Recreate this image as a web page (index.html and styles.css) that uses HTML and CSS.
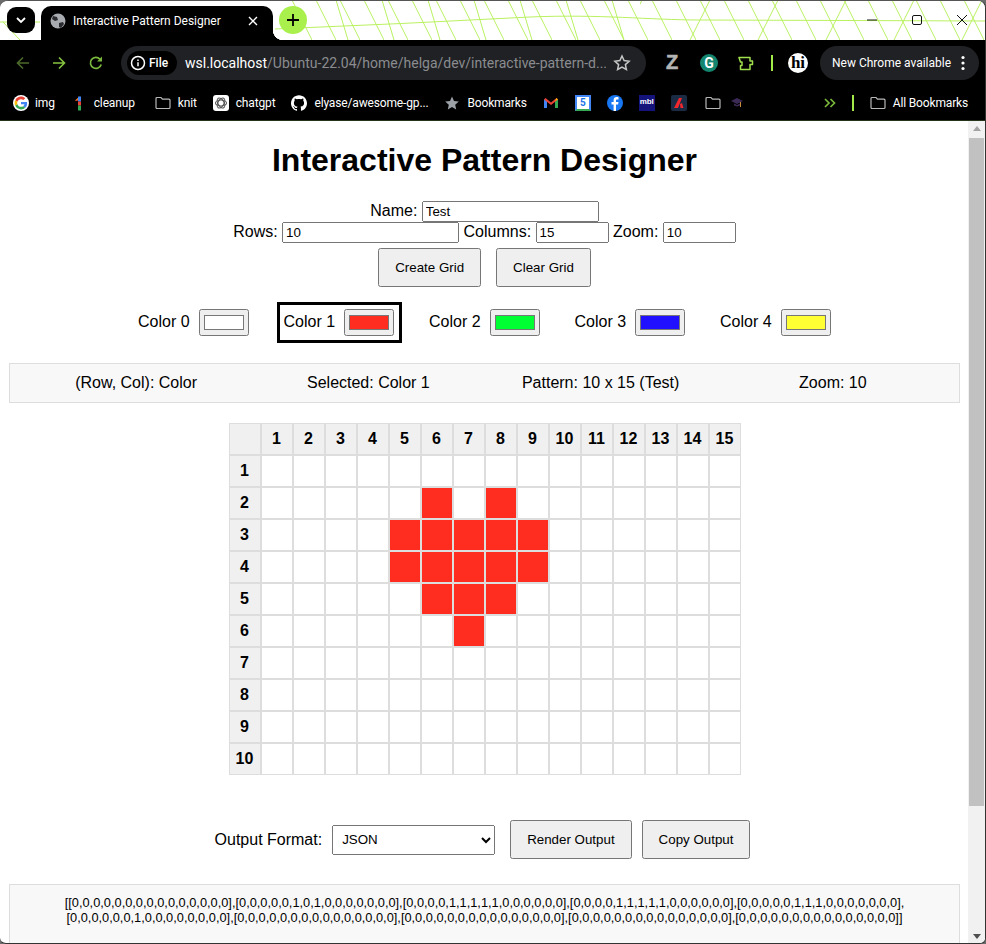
FILE: index.html
```html
<!DOCTYPE html>
<html lang="en">
<head>
    <meta charset="UTF-8">
    <meta name="viewport" content="width=device-width, initial-scale=1.0">
    <title>Interactive Pattern Designer</title>
    <link rel="stylesheet" href="styles.css">
</head>
<body>
<div class="window">
    <header class="titlebar">
        <svg class="theme-lines" width="986" height="40" viewBox="0 0 986 40">
            <defs>
                <pattern id="back-lines" width="24" height="40" patternUnits="userSpaceOnUse">
                    <path d="M4 0L24 40" stroke="#b9f160" fill="none"/>
                </pattern>
                <pattern id="steep-lines" width="46" height="40" patternUnits="userSpaceOnUse">
                    <path d="M14 0L26 40" stroke="#b9f160" fill="none"/>
                </pattern>
                <pattern id="fwd-lines" width="68" height="40" patternUnits="userSpaceOnUse">
                    <path d="M30 0L10 40" stroke="#b9f160" fill="none"/>
                </pattern>
            </defs>
            <rect x="290" width="696" height="40" fill="url(#back-lines)"/>
            <rect x="320" width="320" height="40" fill="url(#steep-lines)"/>
            <rect x="640" width="346" height="40" fill="url(#fwd-lines)"/>
            <path d="M0 22L40 22M3 22L20 40M275 29Q400 24 530 17C600 14 650 20 700 20L986 21" stroke="#b9f160" fill="none"/>
        </svg>
        <button class="tab-search">
            <svg width="12" height="12" viewBox="0 0 12 12"><path d="M2 4l4 4 4-4" stroke="#fff" stroke-width="1.8" fill="none"/></svg>
        </button>
        <div class="tab">
            <svg width="16" height="16" viewBox="0 0 16 16">
                <circle cx="8" cy="8" r="7.5" fill="#a8abb0"/>
                <path d="M3 3l4 1 1 3-3 1-3-2zM9 10l4-1 1 2-3 4-2-1z" fill="#2a2b2e"/>
            </svg>
            <span class="tab-title">Interactive Pattern Designer</span>
            <svg width="12" height="12" viewBox="0 0 12 12"><path d="M2 2l8 8M10 2l-8 8" stroke="#fff" stroke-width="1.4"/></svg>
        </div>
        <button class="new-tab">
            <svg width="14" height="14" viewBox="0 0 14 14"><path d="M7 1v12M1 7h12" stroke="#000" stroke-width="1.8"/></svg>
        </button>
        <div class="window-controls">
            <svg width="12" height="12" viewBox="0 0 12 12"><path d="M1 6h10" stroke="#111"/></svg>
            <svg width="12" height="12" viewBox="0 0 12 12"><rect x="1.5" y="1.5" width="9" height="9" rx="1.5" stroke="#111" fill="none"/></svg>
            <svg width="12" height="12" viewBox="0 0 12 12"><path d="M1 1l10 10M11 1L1 11" stroke="#111"/></svg>
        </div>
    </header>

    <nav class="toolbar">
        <svg class="nav-back" width="16" height="16" viewBox="0 0 16 16"><path d="M14 8H2.5M8 2.5L2.5 8 8 13.5" stroke="#4c6a2a" stroke-width="1.6" fill="none"/></svg>
        <svg class="nav-forward" width="16" height="16" viewBox="0 0 16 16"><path d="M2 8h11.5M8 2.5L13.5 8 8 13.5" stroke="#86c440" stroke-width="1.6" fill="none"/></svg>
        <svg class="nav-reload" width="16" height="16" viewBox="0 0 16 16"><path d="M13.2 9.5A5.5 5.5 0 1 1 12 4.2" stroke="#7ab83c" stroke-width="1.7" fill="none"/><path d="M14 1.5V6.5H9z" fill="#7ab83c"/></svg>
        <div class="omnibox">
            <span class="chip">
                <svg width="16" height="16" viewBox="0 0 16 16"><circle cx="8" cy="8" r="6.5" stroke="#fff" stroke-width="1.5" fill="none"/><path d="M8 7.2v4M8 4.5v1.5" stroke="#fff" stroke-width="1.5"/></svg>
                File
            </span>
            <span class="url"><b>wsl.localhost</b>/Ubuntu-22.04/home/helga/dev/interactive-pattern-d...</span>
            <svg width="18" height="18" viewBox="0 0 18 18"><path d="M9 2l2.1 4.6 5 .6-3.7 3.4 1 4.9L9 13l-4.400 2.500 1-4.900L1.900 7.200l5-.6z" stroke="#c4c7c5" stroke-width="1.500" fill="none"/></svg>
        </div>
        <span class="ext-z">Z</span>
        <span class="ext-g">G</span>
        <svg class="ext-puzzle" width="18" height="18" viewBox="0 0 18 18"><path d="M2 3.500h11v3.500h2.500v3.500H13v5H3.500v-4H5V8H3.500z" stroke="#9fe04c" stroke-width="1.500" stroke-linejoin="round" fill="none"/></svg>
        <span class="divider"></span>
        <span class="avatar">hi</span>
        <span class="update-pill">New Chrome available
            <svg width="4" height="16" viewBox="0 0 4 16"><circle cx="2" cy="2.500" r="1.600" fill="#fff"/><circle cx="2" cy="8" r="1.600" fill="#fff"/><circle cx="2" cy="13.500" r="1.600" fill="#fff"/></svg>
        </span>
    </nav>

    <nav class="bookmarks">
        <a class="bookmark first-mark">
            <svg class="g-logo" width="16" height="16" viewBox="-6 -6 60 60">
                <circle cx="24" cy="24" r="30" fill="#fff"/>
                <path fill="#EA4335" d="M24 9.500c3.540 0 6.710 1.220 9.210 3.600l6.850-6.850C35.900 2.380 30.470 0 24 0 14.620 0 6.510 5.380 2.560 13.220l7.980 6.190C12.430 13.720 17.740 9.500 24 9.500z"/>
                <path fill="#4285F4" d="M46.980 24.550c0-1.570-.15-3.090-.38-4.550H24v9.020h12.940c-.58 2.960-2.260 5.480-4.780 7.180l7.730 6c4.510-4.180 7.090-10.360 7.090-17.650z"/>
                <path fill="#FBBC05" d="M10.530 28.590c-.48-1.450-.76-2.990-.76-4.590s.27-3.140.76-4.590l-7.980-6.190C.92 16.460 0 20.120 0 24c0 3.880.92 7.540 2.560 10.780l7.970-6.190z"/>
                <path fill="#34A853" d="M24 48c6.480 0 11.930-2.130 15.890-5.810l-7.730-6c-2.150 1.450-4.920 2.300-8.160 2.300-6.260 0-11.570-4.220-13.470-9.910l-7.980 6.190C6.510 42.620 14.620 48 24 48z"/>
            </svg>
            img
        </a>
        <a class="bookmark">
            <svg width="16" height="16" viewBox="0 0 16 16">
                <path d="M4 5.500L8.500 1.500V5z" fill="#f9ab00"/><path d="M4 5.500L6.500 3.500V6z" fill="#ea4335"/>
                <rect x="7" y="1.500" width="3" height="5" fill="#4285f4"/><rect x="7" y="6.500" width="3" height="4" fill="#ea4335"/><rect x="7" y="10.500" width="3" height="5" fill="#34a853"/>
            </svg>
            cleanup
        </a>
        <a class="bookmark folder-mark">
            <svg width="16" height="14" viewBox="0 0 16 14"><path d="M1 2.500a1 1 0 0 1 1-1h4l1.500 1.700H14a1 1 0 0 1 1 1v7.300a1 1 0 0 1-1 1H2a1 1 0 0 1-1-1z" stroke="#b8b8b8" stroke-width="1.200" fill="none"/></svg>
            knit
        </a>
        <a class="bookmark">
            <svg width="16" height="16" viewBox="0 0 16 16">
                <rect width="16" height="16" rx="3" fill="#fff"/>
                <g stroke="#555" stroke-width="1.100" fill="none"><ellipse cx="8" cy="8" rx="5.500" ry="3"/><ellipse cx="8" cy="8" rx="5.500" ry="3" transform="rotate(60 8 8)"/><ellipse cx="8" cy="8" rx="5.500" ry="3" transform="rotate(120 8 8)"/></g>
            </svg>
            chatgpt
        </a>
        <a class="bookmark">
            <svg width="16" height="16" viewBox="0 0 24 24"><path fill="#fff" d="M12 .297c-6.630 0-12 5.373-12 12 0 5.303 3.438 9.800 8.205 11.385.6.113.82-.258.82-.577 0-.285-.01-1.040-.015-2.040-3.338.724-4.042-1.610-4.042-1.610C4.422 18.070 3.633 17.700 3.633 17.700c-1.087-.744.084-.729.084-.729 1.205.084 1.838 1.236 1.838 1.236 1.070 1.835 2.809 1.305 3.495.998.108-.776.417-1.305.76-1.605-2.665-.3-5.466-1.332-5.466-5.930 0-1.310.465-2.380 1.235-3.220-.135-.303-.54-1.523.105-3.176 0 0 1.005-.322 3.300 1.230.96-.267 1.980-.399 3-.405 1.020.006 2.040.138 3 .405 2.280-1.552 3.285-1.230 3.285-1.230.645 1.653.24 2.873.12 3.176.765.84 1.230 1.910 1.230 3.220 0 4.610-2.805 5.625-5.475 5.920.42.36.81 1.096.81 2.220 0 1.606-.015 2.896-.015 3.286 0 .315.21.69.825.57C20.565 22.092 24 17.592 24 12.297c0-6.627-5.373-12-12-12"/></svg>
            elyase/awesome-gp...
        </a>
        <a class="bookmark">
            <svg width="16" height="16" viewBox="0 0 16 16"><path d="M8 1.500l2 4.500 4.800.5-3.600 3.200 1 4.800L8 12.100l-4.200 2.400 1-4.800L1.200 6.500 6 6z" fill="#9aa0a6"/></svg>
            Bookmarks
        </a>
        <a class="bookmark">
            <svg width="16" height="16" viewBox="0 0 16 16">
                <path d="M1 13V4l3 2v7z" fill="#4285f4"/><path d="M15 13V4l-3 2v7z" fill="#34a853"/>
                <path d="M1 4.500L2.500 3 8 7.500 13.500 3 15 4.500 8 10z" fill="#ea4335"/><path d="M12 6l1.500-3L15 4.500z" fill="#fbbc04"/>
            </svg>
        </a>
        <a class="bookmark"><span class="cal-tile">5</span></a>
        <a class="bookmark">
            <svg width="16" height="16" viewBox="0 0 16 16"><circle cx="8" cy="8" r="8" fill="#1877f2"/><path d="M9 16V9.500h2.100l.4-2.400H9V5.600c0-.7.3-1.200 1.300-1.200h1.200V2.300C11.100 2.200 10.400 2.100 9.800 2.100 7.900 2.100 6.600 3.300 6.600 5.300v1.800H4.500v2.400h2.100V16z" fill="#fff"/></svg>
        </a>
        <a class="bookmark"><span class="mbl-tile">mbl</span></a>
        <a class="bookmark">
            <svg width="16" height="16" viewBox="0 0 16 16"><rect width="16" height="16" rx="2" fill="#1c2b44"/><path d="M3 13L8 3h3l-4 10zM9 9l2-1 1.500 5H9.500z" fill="#f0282d"/></svg>
        </a>
        <a class="bookmark folder-small">
            <svg width="16" height="14" viewBox="0 0 16 14"><path d="M1 2.500a1 1 0 0 1 1-1h4l1.500 1.700H14a1 1 0 0 1 1 1v7.300a1 1 0 0 1-1 1H2a1 1 0 0 1-1-1z" stroke="#b8b8b8" stroke-width="1.200" fill="none"/></svg>
        </a>
        <svg class="cap-icon" width="12" height="12" viewBox="0 0 12 12"><path d="M0 4l6-3 6 3-6 3z" fill="#3a2a55"/><path d="M3 6.500v2l3 1 3-1v-2L6 8z" fill="#3a2a55"/><path d="M9 5l1 0v5H9z" fill="#c98a3c"/></svg>
        <svg class="more-marks" width="12" height="10" viewBox="0 0 12 10"><path d="M1 1l4 4-4 4M6.500 1l4 4-4 4" stroke="#7ab83c" stroke-width="1.700" fill="none"/></svg>
        <span class="divider"></span>
        <a class="bookmark">
            <svg width="16" height="14" viewBox="0 0 16 14"><path d="M1 2.500a1 1 0 0 1 1-1h4l1.500 1.700H14a1 1 0 0 1 1 1v7.300a1 1 0 0 1-1 1H2a1 1 0 0 1-1-1z" stroke="#b8b8b8" stroke-width="1.200" fill="none"/></svg>
            All Bookmarks
        </a>
    </nav>

    <div class="viewport">
        <main class="page">
            <h1>Interactive Pattern Designer</h1>

            <div class="field-line">
                <label>Name:</label>
                <input class="wide-input" type="text" value="Test">
            </div>
            <div class="field-line">
                <label>Rows:</label>
                <input class="wide-input" type="text" value="10">
                <label>Columns:</label>
                <input class="small-input" type="text" value="15">
                <label>Zoom:</label>
                <input class="small-input" type="text" value="10">
            </div>
            <div class="grid-buttons">
                <button>Create Grid</button>
                <button>Clear Grid</button>
            </div>

            <div class="palette">
                <div class="swatch-item"><span>Color 0</span><input type="color" value="#ffffff"></div>
                <div class="swatch-item selected"><span>Color 1</span><input type="color" value="#ff2d20"></div>
                <div class="swatch-item"><span>Color 2</span><input type="color" value="#00ff33"></div>
                <div class="swatch-item"><span>Color 3</span><input type="color" value="#2010ff"></div>
                <div class="swatch-item"><span>Color 4</span><input type="color" value="#ffff33"></div>
            </div>

            <div class="status-bar">
                <span>(Row, Col): Color</span>
                <span>Selected: Color 1</span>
                <span>Pattern: 10 x 15 (Test)</span>
                <span>Zoom: 10</span>
            </div>

            <div class="pattern-grid">
                <div class="cell head"></div><div class="cell head">1</div><div class="cell head">2</div><div class="cell head">3</div><div class="cell head">4</div><div class="cell head">5</div><div class="cell head">6</div><div class="cell head">7</div><div class="cell head">8</div><div class="cell head">9</div><div class="cell head">10</div><div class="cell head">11</div><div class="cell head">12</div><div class="cell head">13</div><div class="cell head">14</div><div class="cell head">15</div>
                <div class="cell head">1</div><div class="cell"></div><div class="cell"></div><div class="cell"></div><div class="cell"></div><div class="cell"></div><div class="cell"></div><div class="cell"></div><div class="cell"></div><div class="cell"></div><div class="cell"></div><div class="cell"></div><div class="cell"></div><div class="cell"></div><div class="cell"></div><div class="cell"></div>
                <div class="cell head">2</div><div class="cell"></div><div class="cell"></div><div class="cell"></div><div class="cell"></div><div class="cell"></div><div class="cell red"></div><div class="cell"></div><div class="cell red"></div><div class="cell"></div><div class="cell"></div><div class="cell"></div><div class="cell"></div><div class="cell"></div><div class="cell"></div><div class="cell"></div>
                <div class="cell head">3</div><div class="cell"></div><div class="cell"></div><div class="cell"></div><div class="cell"></div><div class="cell red"></div><div class="cell red"></div><div class="cell red"></div><div class="cell red"></div><div class="cell red"></div><div class="cell"></div><div class="cell"></div><div class="cell"></div><div class="cell"></div><div class="cell"></div><div class="cell"></div>
                <div class="cell head">4</div><div class="cell"></div><div class="cell"></div><div class="cell"></div><div class="cell"></div><div class="cell red"></div><div class="cell red"></div><div class="cell red"></div><div class="cell red"></div><div class="cell red"></div><div class="cell"></div><div class="cell"></div><div class="cell"></div><div class="cell"></div><div class="cell"></div><div class="cell"></div>
                <div class="cell head">5</div><div class="cell"></div><div class="cell"></div><div class="cell"></div><div class="cell"></div><div class="cell"></div><div class="cell red"></div><div class="cell red"></div><div class="cell red"></div><div class="cell"></div><div class="cell"></div><div class="cell"></div><div class="cell"></div><div class="cell"></div><div class="cell"></div><div class="cell"></div>
                <div class="cell head">6</div><div class="cell"></div><div class="cell"></div><div class="cell"></div><div class="cell"></div><div class="cell"></div><div class="cell"></div><div class="cell red"></div><div class="cell"></div><div class="cell"></div><div class="cell"></div><div class="cell"></div><div class="cell"></div><div class="cell"></div><div class="cell"></div><div class="cell"></div>
                <div class="cell head">7</div><div class="cell"></div><div class="cell"></div><div class="cell"></div><div class="cell"></div><div class="cell"></div><div class="cell"></div><div class="cell"></div><div class="cell"></div><div class="cell"></div><div class="cell"></div><div class="cell"></div><div class="cell"></div><div class="cell"></div><div class="cell"></div><div class="cell"></div>
                <div class="cell head">8</div><div class="cell"></div><div class="cell"></div><div class="cell"></div><div class="cell"></div><div class="cell"></div><div class="cell"></div><div class="cell"></div><div class="cell"></div><div class="cell"></div><div class="cell"></div><div class="cell"></div><div class="cell"></div><div class="cell"></div><div class="cell"></div><div class="cell"></div>
                <div class="cell head">9</div><div class="cell"></div><div class="cell"></div><div class="cell"></div><div class="cell"></div><div class="cell"></div><div class="cell"></div><div class="cell"></div><div class="cell"></div><div class="cell"></div><div class="cell"></div><div class="cell"></div><div class="cell"></div><div class="cell"></div><div class="cell"></div><div class="cell"></div>
                <div class="cell head">10</div><div class="cell"></div><div class="cell"></div><div class="cell"></div><div class="cell"></div><div class="cell"></div><div class="cell"></div><div class="cell"></div><div class="cell"></div><div class="cell"></div><div class="cell"></div><div class="cell"></div><div class="cell"></div><div class="cell"></div><div class="cell"></div><div class="cell"></div>
            </div>

            <div class="output-controls">
                <label>Output Format:</label>
                <select><option>JSON</option></select>
                <button>Render Output</button>
                <button>Copy Output</button>
            </div>

            <div class="output-box">[[0,0,0,0,0,0,0,0,0,0,0,0,0,0,0],[0,0,0,0,0,1,0,1,0,0,0,0,0,0,0],[0,0,0,0,1,1,1,1,1,0,0,0,0,0,0],[0,0,0,0,1,1,1,1,1,0,0,0,0,0,0],[0,0,0,0,0,1,1,1,0,0,0,0,0,0,0],[0,0,0,0,0,0,1,0,0,0,0,0,0,0,0],[0,0,0,0,0,0,0,0,0,0,0,0,0,0,0],[0,0,0,0,0,0,0,0,0,0,0,0,0,0,0],[0,0,0,0,0,0,0,0,0,0,0,0,0,0,0],[0,0,0,0,0,0,0,0,0,0,0,0,0,0,0]]</div>
        </main>
        <div class="scrollbar">
            <span class="arrow-up"></span>
            <span class="thumb"></span>
            <span class="arrow-down"></span>
        </div>
    </div>
</div>
</body>
</html>
```

FILE: styles.css
```css
* {
    box-sizing: border-box;
}
html, body {
    margin: 0;
    height: 100%;
    background: #6b6b6b;
    overflow: hidden;
}
.window {
    height: 944px;
    display: flex;
    flex-direction: column;
    overflow: hidden;
    background: #fff;
    border-radius: 8px 8px 6px 6px;
    border-top: 1px solid #555;
    border-right: 1px solid #333;
    border-bottom: 1px solid #333;
    font-family: "Liberation Sans", Arial, sans-serif;
}

/* browser chrome */
.titlebar {
    position: relative;
    height: 39px;
    flex: none;
    background: #fff;
    display: flex;
    align-items: flex-start;
}
.theme-lines {
    position: absolute;
    top: -1px;
    left: 0;
}
.tab-search {
    position: relative;
    width: 28px;
    height: 26px;
    margin: 6px 0 0 7px;
    padding: 0;
    border: none;
    border-radius: 9px;
    background: #000;
    display: flex;
    align-items: center;
    justify-content: center;
}
.tab {
    position: relative;
    width: 232px;
    height: 34px;
    margin: 5px 0 0 6px;
    padding: 0 14px 4px 9px;
    background: #000;
    border-radius: 10px 10px 0 0;
    display: flex;
    align-items: center;
    gap: 7px;
    color: #fff;
    font: 12px Roboto, sans-serif;
}
.tab::after {
    content: "";
    position: absolute;
    right: -10px;
    bottom: 0;
    width: 10px;
    height: 10px;
    background: radial-gradient(circle at 100% 0, transparent 10px, #000 10.500px);
}
.tab-title {
    flex: 1;
}
.new-tab {
    position: relative;
    width: 28px;
    height: 28px;
    margin: 5px 0 0 6px;
    padding: 0;
    border: none;
    border-radius: 50%;
    background: #a9f04d;
    display: flex;
    align-items: center;
    justify-content: center;
}
.window-controls {
    position: relative;
    margin: 13px 0 0 auto;
    padding-right: 17px;
    display: flex;
    gap: 33px;
}

.toolbar {
    height: 45px;
    flex: none;
    background: #000;
    display: flex;
    align-items: center;
    padding-left: 15px;
}
.nav-forward {
    margin-left: 20px;
}
.nav-reload {
    margin-left: 21px;
}
.omnibox {
    width: 525px;
    height: 34px;
    margin-left: 17px;
    padding: 0 15px 0 6px;
    border-radius: 17px;
    background: #202124;
    display: flex;
    align-items: center;
    font: 14px Roboto, sans-serif;
    color: #8a8c90;
}
.chip {
    height: 24px;
    width: 50px;
    padding-left: 3px;
    margin-right: 8px;
    border-radius: 12px;
    background: #000;
    display: flex;
    align-items: center;
    gap: 3px;
    color: #fff;
    font-size: 12px;
    font-weight: 500;
}
.url {
    flex: 1;
    white-space: nowrap;
}
.url b {
    font-weight: 400;
    color: #fff;
}
.ext-z {
    width: 14px;
    margin-left: 20px;
    color: #b4b4b4;
    font: bold 20px "Liberation Sans", sans-serif;
    -webkit-text-stroke: 0.6px #b4b4b4;
}
.ext-g {
    width: 18px;
    height: 18px;
    margin-left: 20px;
    border-radius: 50%;
    background: #14856f;
    color: #fff;
    font: bold 14px/18px Roboto, sans-serif;
    text-align: center;
}
.ext-puzzle {
    margin-left: 19px;
}
.divider {
    width: 2px;
    height: 16px;
    background: #a2ea4a;
}
.toolbar .divider {
    margin-left: 16px;
}
.avatar {
    width: 20px;
    height: 20px;
    margin-left: 15px;
    border-radius: 50%;
    background: #fff;
    color: #000;
    font: bold 17px/19px "Liberation Serif", serif;
    text-align: center;
}
.update-pill {
    width: 159px;
    height: 34px;
    margin-left: 12px;
    padding: 0 14px 0 12px;
    border-radius: 17px;
    background: #202124;
    display: flex;
    align-items: center;
    justify-content: space-between;
    color: #fff;
    font: 12px Roboto, sans-serif;
}

.bookmarks {
    height: 36px;
    flex: none;
    background: #000;
    border-bottom: 1px solid #26331a;
    display: flex;
    align-items: center;
    gap: 16px;
    padding-left: 13px;
    color: #fff;
    font: 12px Roboto, sans-serif;
    letter-spacing: -0.15px;
}
.bookmark {
    display: flex;
    align-items: center;
    gap: 7px;
}
.first-mark {
    gap: 6px;
}
.folder-mark {
    margin-left: 4px;
}
.folder-small {
    margin-left: 2px;
}
.cap-icon {
    margin-left: -6px;
}
.more-marks {
    margin-left: 65px;
}
.cal-tile {
    width: 16px;
    height: 16px;
    background: #fff;
    border: 2px solid #4285f4;
    border-bottom-color: #34a853;
    color: #1a73e8;
    font: bold 10px/12px Roboto, sans-serif;
    text-align: center;
}
.mbl-tile {
    width: 16px;
    height: 16px;
    background: #14147a;
    color: #fff;
    font: bold 8px/14px "Liberation Sans", sans-serif;
    text-align: center;
}

/* page */
.viewport {
    flex: 1;
    min-height: 0;
    display: flex;
    padding-left: 1px;
}
.page {
    width: 967px;
    flex: none;
    overflow: hidden;
    color: #000;
    font-size: 16px;
    text-align: center;
}
h1 {
    margin: 21px 0 22px;
    font-size: 32px;
    line-height: 37px;
}
.field-line {
    height: 21px;
}
.small-input {
    width: 73px;
}
.wide-input {
    width: 177px;
}
.grid-buttons {
    margin-top: 5px;
    display: flex;
    justify-content: center;
    gap: 15px;
}
button {
    padding: 10px 15px;
    font-family: "Liberation Sans", Arial, sans-serif;
}
.palette {
    margin-top: 15px;
    display: flex;
    justify-content: center;
    gap: 20.500px;
}
.swatch-item {
    width: 125px;
    padding: 4px;
    border: 3px solid transparent;
    display: flex;
    align-items: center;
    gap: 9px;
}
.swatch-item span {
    margin-top: -2px;
}
.swatch-item.selected {
    border-color: #000;
}
.swatch-item input {
    width: 50px;
    height: 27px;
    margin: 0;
}
.status-bar {
    margin: 20px 8px;
    padding: 10px;
    background: #f8f8f8;
    border: 1px solid #ddd;
    display: grid;
    grid-template-columns: repeat(4, 1fr);
}
.pattern-grid {
    width: 512px;
    margin: 0 auto;
    display: grid;
    grid-template-columns: repeat(16, 32px);
    grid-auto-rows: 32px;
}
.cell {
    border: 1px solid #ddd;
    background: #fff;
}
.cell.head {
    background: #f0f0f0;
    font-weight: bold;
    line-height: 30px;
}
.cell.red {
    background: #ff2d20;
}
.output-controls {
    margin-top: 45px;
    padding-right: 4px;
    display: flex;
    justify-content: center;
    align-items: center;
}
.output-controls select {
    width: 163px;
    height: 30px;
    margin: 0 15px 0 10px;
    padding-left: 5px;
    font-family: "Liberation Sans", Arial, sans-serif;
}
.output-controls button + button {
    margin-left: 10px;
}
.output-box {
    margin: 25px 8px 0;
    padding: 10px;
    background: #f8f8f8;
    border: 1px solid #ddd;
    font-size: 12.800px;
    line-height: 15px;
    height: 80px;
}

/* fake scrollbar, the page is cut off at the window edge */
.scrollbar {
    width: 17px;
    flex: none;
    background: #f1f1f1;
    display: flex;
    flex-direction: column;
    align-items: center;
}
.arrow-up, .arrow-down {
    width: 0;
    height: 0;
    border-left: 4px solid transparent;
    border-right: 4px solid transparent;
}
.arrow-up {
    margin: 5px 0 7px;
    border-bottom: 5px solid #a3a3a3;
}
.thumb {
    width: 15px;
    height: 668px;
    background: #c1c1c1;
}
.arrow-down {
    margin-top: auto;
    margin-bottom: 4px;
    border-top: 5px solid #505050;
}
```
